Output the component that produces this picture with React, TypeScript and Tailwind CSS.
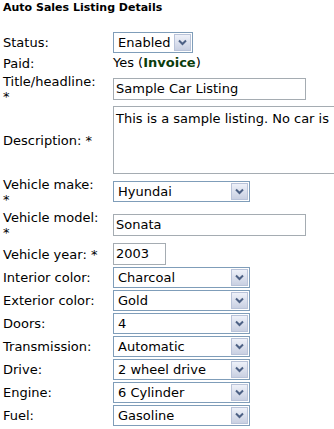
import React from 'react';

const font = { fontFamily: '"DejaVu Sans", Verdana, sans-serif' };

function Arrow() {
  return (
    <span className="ml-auto mr-[1px] flex h-[17px] w-[17px] items-center justify-center border border-[#b9c3d9] bg-gradient-to-b from-[#eef1f9] to-[#c9d0e2]">
      <svg width="9" height="7" viewBox="0 0 9 7">
        <path d="M1 1.5 L4.5 5 L8 1.5" fill="none" stroke="#4d6185" strokeWidth="2" />
      </svg>
    </span>
  );
}

function Select({ value, w }: { value: string; w: string }) {
  return (
    <div className={`flex h-[21px] items-center border border-[#7f9db9] bg-white pl-[4px] ${w}`}>
      <span className="leading-4">{value}</span>
      <Arrow />
    </div>
  );
}

function Input({ value, w }: { value: string; w: string }) {
  return (
    <div className={`flex h-[22px] items-center border border-[#a5acb2] bg-white pl-[2px] ${w}`}>
      <span className="leading-4">{value}</span>
    </div>
  );
}

function Row({ label, h = 'h-[23px]', children }: { label: React.ReactNode; h?: string; children: React.ReactNode }) {
  return (
    <div className={`flex items-center ${h}`}>
      <div className="w-[113px] shrink-0 pl-[3px] leading-[15px]">{label}</div>
      <div>{children}</div>
    </div>
  );
}

const selects: [string, string][] = [
  ['Interior color:', 'Charcoal'],
  ['Exterior color:', 'Gold'],
  ['Doors:', '4'],
  ['Transmission:', 'Automatic'],
  ['Drive:', '2 wheel drive'],
  ['Engine:', '6 Cylinder'],
  ['Fuel:', 'Gasoline'],
];

export default function App() {
  return (
    <div className="h-[429px] w-[334px] overflow-hidden bg-white text-[13px] text-black" style={font}>
      <div className="pl-[3px] pt-[1px] text-[11px] font-bold leading-[14px]">Auto Sales Listing Details</div>
      <div className="mt-[16px]">
        <Row label="Status:">
          <Select value="Enabled" w="w-[80px]" />
        </Row>
        <Row label="Paid:" h="h-[18px]">
          <span className="leading-4">
            Yes (<b className="text-[#0b3d0b]">Invoice</b>)
          </span>
        </Row>
        <Row label={<>Title/headline:<br />*</>} h="h-[33px]">
          <Input value="Sample Car Listing" w="w-[193px]" />
        </Row>
        <Row label="Description: *" h="h-[70px]">
          <div className="h-[68px] w-[240px] border border-[#a5acb2] bg-white pl-[2px] pt-[4px] leading-4 whitespace-nowrap">
            This is a sample listing. No car is
          </div>
        </Row>
        <Row label={<>Vehicle make:<br />*</>} h="h-[33px]">
          <Select value="Hyundai" w="w-[137px]" />
        </Row>
        <Row label={<>Vehicle model:<br />*</>} h="h-[34px]">
          <Input value="Sonata" w="w-[193px]" />
        </Row>
        <Row label="Vehicle year: *" h="h-[24px]">
          <Input value="2003" w="w-[53px]" />
        </Row>
        {selects.map(([l, v]) => (
          <Row key={l} label={l}>
            <Select value={v} w="w-[137px]" />
          </Row>
        ))}
      </div>
    </div>
  );
}
